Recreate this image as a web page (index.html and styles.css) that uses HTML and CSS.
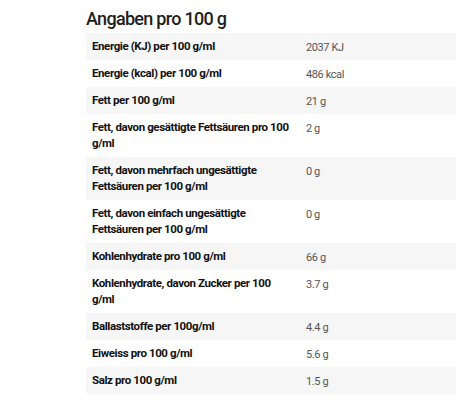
FILE: index.html
```html
<!DOCTYPE html>
<html lang="de">
<head>
<meta charset="utf-8">
<link rel="stylesheet" href="styles.css">
</head>
<body>
<section class="nutrition">
  <h2 class="title">Angaben pro 100 g</h2>
  <table class="table">
    <tbody>
      <tr><th>Energie (KJ) per 100 g/ml</th><td>2037 KJ</td></tr>
      <tr><th>Energie (kcal) per 100 g/ml</th><td>486 kcal</td></tr>
      <tr><th>Fett per 100 g/ml</th><td>21 g</td></tr>
      <tr><th>Fett, davon gesättigte Fettsäuren pro 100 g/ml</th><td>2 g</td></tr>
      <tr><th>Fett, davon mehrfach ungesättigte Fettsäuren per 100 g/ml</th><td>0 g</td></tr>
      <tr><th>Fett, davon einfach ungesättigte Fettsäuren per 100 g/ml</th><td>0 g</td></tr>
      <tr><th>Kohlenhydrate pro 100 g/ml</th><td>66 g</td></tr>
      <tr><th>Kohlenhydrate, davon Zucker per 100 g/ml</th><td>3.7 g</td></tr>
      <tr><th>Ballaststoffe per 100g/ml</th><td>4.4 g</td></tr>
      <tr><th>Eiweiss pro 100 g/ml</th><td>5.6 g</td></tr>
      <tr><th>Salz pro 100 g/ml</th><td>1.5 g</td></tr>
    </tbody>
  </table>
</section>
</body>
</html>
```
FILE: styles.css
```css
html, body {
  margin: 0;
  padding: 0;
  background: #fff;
}
body {
  font-family: Roboto, "Liberation Sans", sans-serif;
  color: #1a1a1a;
}
.nutrition {
  padding: 8px 0 0 86px;
}
.title {
  margin: 0 0 3px 0;
  font-size: 18px;
  line-height: 22px;
  font-weight: 500;
  letter-spacing: -0.7px;
  color: #1e1e1e;
}
.table {
  width: 370px;
  border-collapse: collapse;
  line-height: 16px;
}
.table th,
.table td {
  vertical-align: top;
  text-align: left;
}
.table th {
  width: 202px;
  padding: 5px 6px 6px 6px;
  font-size: 11.5px;
  font-weight: 700;
  letter-spacing: -0.4px;
  color: #111;
}
.table td {
  padding: 7px 6px 4px 6px;
  font-size: 11px;
  font-weight: 400;
  letter-spacing: -0.4px;
  color: #555;
}
.table tr:nth-child(odd) {
  background: #f6f6f6;
}
```
